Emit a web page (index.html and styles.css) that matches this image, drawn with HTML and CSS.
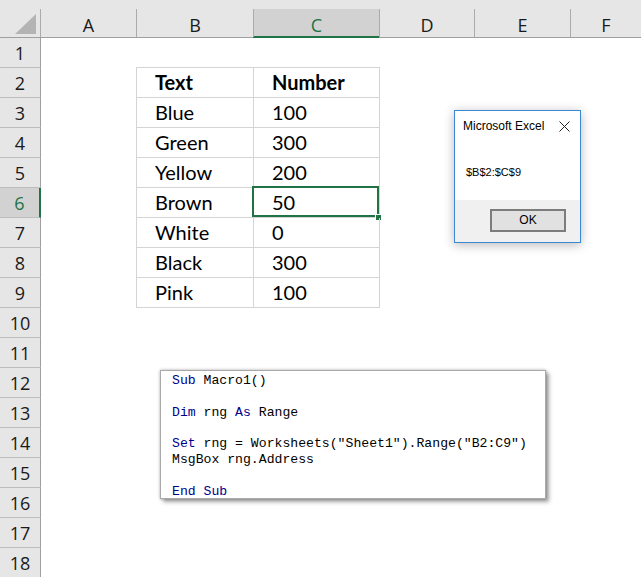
FILE: index.html
```html
<!DOCTYPE html>
<html>
<head>
<meta charset="utf-8">
<link rel="stylesheet" href="styles.css">
</head>
<body>
<div class="sheet">
  <div class="corner"><div class="lbl"><svg class="tri" width="22" height="21" viewBox="0 0 22 21"><polygon points="21,0 21,20 0,20" fill="#b4b4b4"/></svg></div></div>
  <div class="colhead first"><div class="lbl">A</div></div>
  <div class="colhead"><div class="lbl">B</div></div>
  <div class="colhead sel"><div class="lbl">C</div></div>
  <div class="colhead"><div class="lbl">D</div></div>
  <div class="colhead"><div class="lbl">E</div></div>
  <div class="colhead"><div class="lbl">F</div></div>

  <div class="rowhead r1">1</div>
  <div class="rowhead r2">2</div>
  <div class="rowhead r3">3</div>
  <div class="rowhead r4">4</div>
  <div class="rowhead r5">5</div>
  <div class="rowhead r6 sel">6</div>
  <div class="rowhead r7">7</div>
  <div class="rowhead r8">8</div>
  <div class="rowhead r9">9</div>
  <div class="rowhead r10">10</div>
  <div class="rowhead r11">11</div>
  <div class="rowhead r12">12</div>
  <div class="rowhead r13">13</div>
  <div class="rowhead r14">14</div>
  <div class="rowhead r15">15</div>
  <div class="rowhead r16">16</div>
  <div class="rowhead r17">17</div>
  <div class="rowhead r18">18</div>

  <div class="table">
    <div class="cell bold">Text</div><div class="cell bold">Number</div>
    <div class="cell">Blue</div><div class="cell">100</div>
    <div class="cell">Green</div><div class="cell">300</div>
    <div class="cell">Yellow</div><div class="cell">200</div>
    <div class="cell">Brown</div><div class="cell active">50<div class="selbox"></div><div class="handle"></div></div>
    <div class="cell">White</div><div class="cell">0</div>
    <div class="cell">Black</div><div class="cell">300</div>
    <div class="cell">Pink</div><div class="cell">100</div>
  </div>

  <div class="msgbox">
    <div class="mb-title">
      <span>Microsoft Excel</span>
      <svg class="mb-close" width="11" height="11" viewBox="0 0 11 11"><path d="M0.5 0.5 L10.5 10.5 M10.5 0.5 L0.5 10.5" stroke="#222" stroke-width="1" fill="none"/></svg>
    </div>
    <div class="mb-msg">$B$2:$C$9</div>
    <div class="mb-foot"><div class="mb-btn">OK</div></div>
  </div>

  <div class="code">
    <div class="ln"><span class="kw">Sub</span> Macro1()</div>
    <div class="ln"></div>
    <div class="ln"><span class="kw">Dim</span> rng <span class="kw">As</span> Range</div>
    <div class="ln"></div>
    <div class="ln"><span class="kw">Set</span> rng = Worksheets("Sheet1").Range("B2:C9")</div>
    <div class="ln">MsgBox rng.Address</div>
    <div class="ln"></div>
    <div class="ln"><span class="kw">End Sub</span></div>
  </div>
</div>
</body>
</html>
```

FILE: styles.css
```css
html, body {
  margin: 0;
  padding: 0;
  background: #ffffff;
  overflow: hidden;
}

.sheet {
  position: relative;
  width: 641px;
  height: 577px;
  overflow: hidden;
  display: grid;
  grid-template-columns: 41px 95px 117px 126px 95px 96px 71px;
  grid-template-rows: 38px repeat(18, 30px);
  background: #ffffff;
  font-family: "Open Sans", "Noto Sans", sans-serif;
}

.corner,
.colhead {
  box-sizing: border-box;
  background: #e6e6e6;
  border-bottom: 1px solid #9f9f9f;
  padding-top: 9px;
  grid-row: 1;
}

.corner .lbl {
  height: 28px;
  box-sizing: border-box;
  border-right: 1px solid #ababab;
  position: relative;
}

.tri {
  position: absolute;
  left: 15px;
  top: 5px;
}

.colhead .lbl {
  height: 28px;
  box-sizing: border-box;
  border-left: 1px solid #ababab;
  text-align: center;
  font-size: 18px;
  line-height: 28px;
  padding-top: 2px;
  color: #1a1a1a;
}

.colhead.first .lbl {
  border-left: none;
}

.colhead.sel {
  border-bottom-color: #217346;
}

.colhead.sel .lbl {
  background: #d2d2d2;
  box-shadow: inset 0 -1px 0 #217346;
  color: #217346;
}

.rowhead {
  grid-column: 1;
  box-sizing: border-box;
  background: #e6e6e6;
  border-right: 1px solid #9f9f9f;
  border-bottom: 1px solid #bdbdbd;
  font-size: 18px;
  line-height: 29px;
  padding-top: 1px;
  text-align: center;
  color: #1a1a1a;
}

.rowhead.sel {
  background: #d2d2d2;
  border-right: 2px solid #217346;
  color: #217346;
}

.r1 { grid-row: 2; }
.r2 { grid-row: 3; }
.r3 { grid-row: 4; }
.r4 { grid-row: 5; }
.r5 { grid-row: 6; }
.r6 { grid-row: 7; }
.r7 { grid-row: 8; }
.r8 { grid-row: 9; }
.r9 { grid-row: 10; }
.r10 { grid-row: 11; }
.r11 { grid-row: 12; }
.r12 { grid-row: 13; }
.r13 { grid-row: 14; }
.r14 { grid-row: 15; }
.r15 { grid-row: 16; }
.r16 { grid-row: 17; }
.r17 { grid-row: 18; }
.r18 { grid-row: 19; }

.table {
  grid-column: 3 / 5;
  grid-row: 3 / 11;
  align-self: start;
  justify-self: start;
  margin-top: -1px;
  width: 244px;
  height: 241px;
  box-sizing: border-box;
  border-top: 1px solid #d4d4d4;
  border-left: 1px solid #d4d4d4;
  display: grid;
  grid-template-columns: 117px 126px;
  grid-auto-rows: 30px;
  font-family: "Lato", "Liberation Sans", sans-serif;
  font-size: 20px;
  color: #000000;
}

.cell {
  position: relative;
  box-sizing: border-box;
  border-right: 1px solid #d4d4d4;
  border-bottom: 1px solid #d4d4d4;
  padding-left: 18px;
  line-height: 29px;
}

.cell.bold {
  font-weight: 700;
}

.selbox {
  position: absolute;
  left: -2px;
  top: -2px;
  right: 0;
  bottom: 0;
  border: 2px solid #217346;
}

.handle {
  position: absolute;
  right: -3px;
  bottom: -4px;
  width: 5px;
  height: 5px;
  background: #217346;
  border: 1px solid #ffffff;
}

.msgbox {
  position: absolute;
  left: 454px;
  top: 110px;
  width: 127px;
  height: 133px;
  box-sizing: border-box;
  border: 1px solid #3b87d4;
  background: #ffffff;
  box-shadow: 0 2px 10px rgba(0, 0, 0, 0.28);
  display: flex;
  flex-direction: column;
  font-family: "Liberation Sans", Arial, sans-serif;
  color: #000000;
}

.mb-title {
  display: flex;
  justify-content: space-between;
  align-items: flex-start;
  padding: 8px 10px 0 8px;
  font-size: 12px;
  line-height: 14px;
}

.mb-close {
  margin-top: 2px;
}

.mb-msg {
  padding: 33px 0 0 11px;
  font-size: 11px;
  line-height: 13px;
  flex: 1;
}

.mb-foot {
  height: 42px;
  background: #f0f0f0;
  display: flex;
  justify-content: flex-end;
  align-items: flex-start;
  padding: 9px 14px 0 0;
  box-sizing: border-box;
}

.mb-btn {
  width: 76px;
  height: 23px;
  box-sizing: border-box;
  border: 2px solid #7c7c7c;
  background: #e1e1e1;
  font-size: 12px;
  line-height: 19px;
  text-align: center;
}

.code {
  position: absolute;
  left: 160px;
  top: 370px;
  width: 386px;
  height: 129px;
  box-sizing: border-box;
  padding: 2px 0 0 11px;
  background: #ffffff;
  border: 1px solid #a9a9a9;
  box-shadow: 0 0 3px rgba(0, 0, 0, 0.3), 3px 3px 4px rgba(0, 0, 0, 0.35);
  overflow: hidden;
  font-family: "Liberation Mono", "Courier New", monospace;
  font-size: 13.15px;
  color: #000000;
}

.ln {
  height: 15.86px;
  line-height: 15.86px;
  white-space: pre;
  overflow: visible;
}

.kw {
  color: #00008b;
}
```
